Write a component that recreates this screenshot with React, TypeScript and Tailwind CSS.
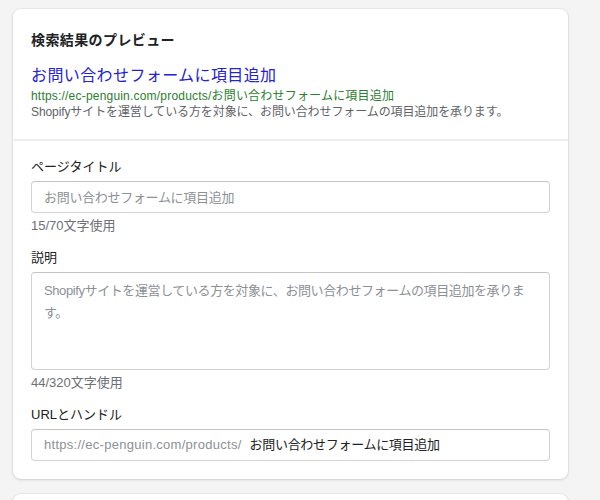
import React from 'react';

const title = 'お問い合わせフォームに項目追加';
const description = 'Shopifyサイトを運営している方を対象に、お問い合わせフォームの項目追加を承ります。';
const baseUrl = 'https://ec-penguin.com/products/';

export default function App() {
  return (
    <div className="min-h-screen bg-[#f4f4f4] pl-[13px] pt-[9px] font-['Liberation_Sans','Noto_Sans_CJK_JP',sans-serif] text-[#202223]">
      <div className="w-[555px] rounded-lg bg-white shadow-[0_0_0_1px_rgba(63,63,68,0.05),0_1px_3px_rgba(63,63,68,0.15)]">
        {/* Search preview */}
        <div className="px-[18px] pt-[21px] pb-[19px]">
          <h2 className="text-[14px] leading-5 font-bold tracking-[0.4px]">検索結果のプレビュー</h2>
          <div className="mt-[14px]">
            <p className="text-[16px] leading-6 tracking-[0.4px] text-[#2323cf]">{title}</p>
            <p className="text-[12px] leading-4 tracking-[0.2px] text-[#2b7d2f]">{baseUrl + title}</p>
            <p className="text-[12px] leading-4 tracking-[-0.1px] text-[#5f6368]">{description}</p>
          </div>
        </div>

        <div className="border-t-2 border-[#ededed] px-[18px] pt-[16px] pb-[18px] text-[13px]">
          {/* Page title */}
          <label className="block leading-5">ページタイトル</label>
          <input
            readOnly
            placeholder={title}
            className="mt-1 h-8 w-full rounded border border-[#d3d3d3] border-t-[#c4c4c4] px-3 tracking-[-0.3px] text-[#202223] placeholder:text-[#8c9196] outline-none"
          />
          <p className="mt-[3px] leading-5 text-[#6d7175]">15/70文字使用</p>

          {/* Description */}
          <label className="mt-3 block leading-5">説明</label>
          <textarea
            readOnly
            value={description}
            className="mt-1 block h-[98px] w-full resize-none rounded border border-[#d3d3d3] border-t-[#c4c4c4] px-3 py-[7px] leading-[22px] tracking-[-0.4px] text-[#8c9196] outline-none"
          />
          <p className="mt-[3px] leading-5 text-[#6d7175]">44/320文字使用</p>

          {/* URL and handle */}
          <label className="mt-3 block leading-5">URLとハンドル</label>
          <div className="mt-1 flex h-8 w-full items-center rounded border border-[#d3d3d3] border-t-[#c4c4c4] px-3">
            <span className="tracking-[0.28px] text-[#8c9196]">{baseUrl}</span>
            <input
              readOnly
              value={title}
              className="ml-2 min-w-0 flex-1 tracking-[-0.3px] text-[#202223] outline-none"
            />
          </div>
        </div>
      </div>

      <div className="mt-[15px] h-[100px] w-[555px] rounded-t-lg bg-white shadow-[0_0_0_1px_rgba(63,63,68,0.05),0_1px_3px_rgba(63,63,68,0.15)]" />
    </div>
  );
}
